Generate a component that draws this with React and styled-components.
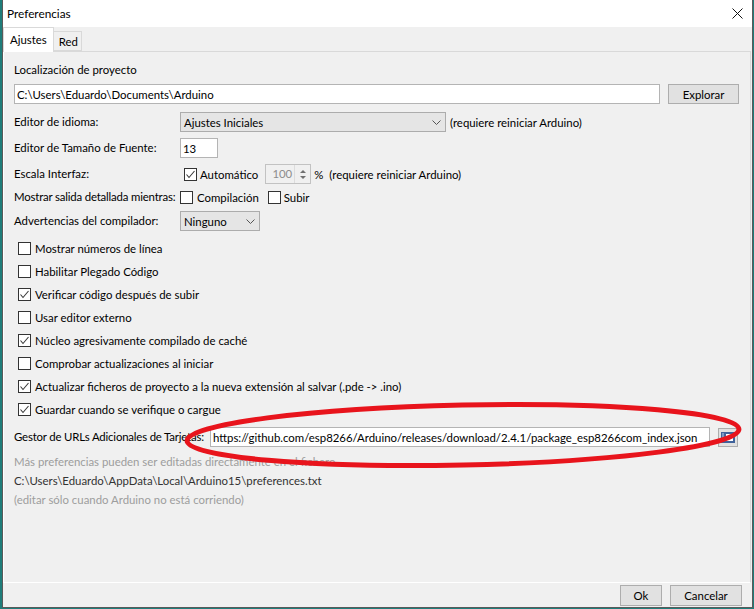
import React from "react";
import styled, { createGlobalStyle } from "styled-components";

const GlobalStyle = createGlobalStyle`
  html, body { margin: 0; padding: 0; }
  body {
    background: #1f7d7a;
    font-family: Lato, "Liberation Sans", sans-serif;
    font-size: 11.4px;
    color: #000;
  }
`;

const Page = styled.div`
  position: relative;
  width: 754px;
  height: 609px;
  padding-left: 2px;
  box-sizing: border-box;
  overflow: hidden;
`;

const Window = styled.div`
  width: 751px;
  height: 608px;
  box-sizing: border-box;
  border: 1px solid #5a5a5a;
  border-top: none;
  background: #f0f0f0;
  display: flex;
  flex-direction: column;
`;

const TitleBar = styled.div`
  flex: none;
  height: 27px;
  background: #fff;
  display: flex;
  align-items: center;
  justify-content: space-between;
  padding: 0 9px 0 4px;
`;

const Title = styled.span`
  font-size: 11.8px;
`;

const TabStrip = styled.div`
  flex: none;
  height: 24px;
  display: flex;
  align-items: flex-end;
`;

const Tab = styled.div`
  position: relative;
  z-index: 1;
  box-sizing: border-box;
  height: ${(p) => (p.$active ? "25px" : "20px")};
  margin-bottom: ${(p) => (p.$active ? "-1px" : "0")};
  padding: ${(p) => (p.$active ? "3px 6px 0" : "1px 3px 0 5px")};
  background: ${(p) => (p.$active ? "#fff" : "#f0f0f0")};
  border: 1px solid #d9d9d9;
  border-bottom: ${(p) => (p.$active ? "none" : "1px solid #d9d9d9")};
  border-left: ${(p) => (p.$active ? "1px solid #d9d9d9" : "none")};
  line-height: 17px;
`;

const Panel = styled.div`
  flex: 1;
  margin-right: 1px;
  border: 1px solid #d9d9d9;
  border-left-color: #fff;
  border-bottom-color: #fff;
  padding: 8px 11px 0 10px;
  display: flex;
  flex-direction: column;
`;

const Label = styled.div`
  line-height: 20px;
  white-space: nowrap;
  flex: none;
  width: ${(p) => (p.$width ? `${p.$width}px` : "auto")};
  letter-spacing: ${(p) => (p.$tight ? "-0.18px" : "normal")};
`;

const Row = styled.div`
  display: flex;
  align-items: center;
  height: 20px;
  margin-top: ${(p) => p.$top || 0}px;
`;

const TextField = styled.div`
  box-sizing: border-box;
  height: 20px;
  width: ${(p) => (p.$width ? `${p.$width}px` : "auto")};
  flex: ${(p) => (p.$width ? "none" : "1")};
  border: 1px solid #b4b4b4;
  background: #fff;
  padding: 0 2px;
  display: flex;
  align-items: center;
  white-space: nowrap;
  overflow: hidden;
`;

const Button = styled.button`
  box-sizing: border-box;
  width: ${(p) => p.$width}px;
  height: ${(p) => p.$height || 20}px;
  margin-left: ${(p) => p.$left || 0}px;
  border: 1px solid #adadad;
  background: #e1e1e1;
  font-family: inherit;
  font-size: 11.4px;
  color: #000;
  padding: 0;
  display: flex;
  align-items: center;
  justify-content: center;
  flex: none;
`;

const Select = styled.div`
  box-sizing: border-box;
  width: ${(p) => p.$width}px;
  height: 20px;
  border: 1px solid #acacac;
  background: #e5e5e5;
  padding: 0 4px 0 3px;
  display: flex;
  align-items: center;
  justify-content: space-between;
  flex: none;
`;

const Hint = styled.span`
  margin-left: ${(p) => p.$left || 0}px;
  white-space: nowrap;
`;

const CheckWrap = styled.label`
  display: flex;
  align-items: center;
  margin-left: ${(p) => p.$left || 0}px;
  white-space: nowrap;
`;

const Box = styled.span`
  box-sizing: border-box;
  width: 13px;
  height: 13px;
  border: 1px solid #333;
  background: #fff;
  margin-right: ${(p) => p.$gap || 4}px;
  display: flex;
  align-items: center;
  justify-content: center;
  flex: none;
`;

const CheckList = styled.div`
  margin-top: 6px;
  padding-left: 4px;
  display: flex;
  flex-direction: column;
`;

const CheckRow = styled.div`
  height: 23px;
  display: flex;
  align-items: center;
`;

const SpinBox = styled.div`
  box-sizing: border-box;
  width: 46px;
  height: 20px;
  margin-left: 7px;
  border: 1px solid #c2c2c2;
  background: #f0f0f0;
  display: flex;
  flex: none;
`;

const SpinValue = styled.div`
  flex: 1;
  text-align: right;
  padding-right: 2px;
  line-height: 18px;
  color: #8c8c8c;
`;

const SpinArrows = styled.div`
  width: 15px;
  border-left: 1px solid #dcdcdc;
  display: flex;
  flex-direction: column;
  align-items: center;
  justify-content: center;
  gap: 3px;
`;

const Arrow = styled.span`
  width: 0;
  height: 0;
  border-left: 3px solid transparent;
  border-right: 3px solid transparent;
  border-bottom: ${(p) => (p.$up ? "3px solid #707070" : "none")};
  border-top: ${(p) => (p.$up ? "none" : "3px solid #707070")};
`;

const Note = styled.div`
  line-height: 19px;
  white-space: nowrap;
  color: ${(p) => (p.$muted ? "#9d9d9d" : "#333")};
`;

const Notes = styled.div`
  margin-top: 5px;
`;

const Footer = styled.div`
  flex: none;
  height: 24px;
  box-sizing: border-box;
  padding: 2px 10px 0 0;
  display: flex;
  justify-content: flex-end;
  gap: 8px;
`;

const Overlay = styled.svg`
  position: absolute;
  left: 0;
  top: 0;
  pointer-events: none;
`;

const Chevron = () => (
  <svg width="9" height="5" viewBox="0 0 9 5">
    <polyline points="0.5,0.5 4.5,4.5 8.5,0.5" fill="none" stroke="#555" strokeWidth="1" />
  </svg>
);

const Check = ({ checked, gap, children, left }) => (
  <CheckWrap $left={left}>
    <Box $gap={gap}>
      {checked && (
        <svg width="11" height="11" viewBox="0 0 11 11">
          <polyline points="1.5,5.5 4,8.5 9.5,2" fill="none" stroke="#3a3a3a" strokeWidth="1.1" />
        </svg>
      )}
    </Box>
    {children}
  </CheckWrap>
);

const options = [
  ["Mostrar números de línea", false],
  ["Habilitar Plegado Código", false],
  ["Verificar código después de subir", true],
  ["Usar editor externo", false],
  ["Núcleo agresivamente compilado de caché", true],
  ["Comprobar actualizaciones al iniciar", false],
  ["Actualizar ficheros de proyecto a la nueva extensión al salvar (.pde -> .ino)", true],
  ["Guardar cuando se verifique o cargue", true],
];

export default function App() {
  return (
    <Page>
      <GlobalStyle />
      <Window>
        <TitleBar>
          <Title>Preferencias</Title>
          <svg width="11" height="11" viewBox="0 0 11 11">
            <path d="M0.5 0.5 L10.5 10.5 M10.5 0.5 L0.5 10.5" stroke="#111" strokeWidth="1" />
          </svg>
        </TitleBar>
        <TabStrip>
          <Tab $active>Ajustes</Tab>
          <Tab>Red</Tab>
        </TabStrip>
        <Panel>
          <Label>Localización de proyecto</Label>
          <Row $top={4}>
            <TextField>C:\Users\Eduardo\Documents\Arduino</TextField>
            <Button $width={71} $left={8}>Explorar</Button>
          </Row>
          <Row $top={8}>
            <Label $width={166}>Editor de idioma:</Label>
            <Select $width={266}>
              <span>Ajustes Iniciales</span>
              <Chevron />
            </Select>
            <Hint $left={4}>(requiere reiniciar Arduino)</Hint>
          </Row>
          <Row $top={6}>
            <Label $width={166}>Editor de Tamaño de Fuente:</Label>
            <TextField $width={38}>13</TextField>
          </Row>
          <Row $top={6}>
            <Label $width={166}>Escala Interfaz:</Label>
            <Check checked left={4} gap={3}>Automático</Check>
            <SpinBox>
              <SpinValue>100</SpinValue>
              <SpinArrows>
                <Arrow $up />
                <Arrow />
              </SpinArrows>
            </SpinBox>
            <Hint $left={3}>%</Hint>
            <Hint $left={6}>(requiere reiniciar Arduino)</Hint>
          </Row>
          <Row $top={3}>
            <Label $width={166} $tight>Mostrar salida detallada mientras:</Label>
            <Check>Compilación</Check>
            <Check left={9} gap={3}>Subir</Check>
          </Row>
          <Row $top={4}>
            <Label $width={166}>Advertencias del compilador:</Label>
            <Select $width={80}>
              <span>Ninguno</span>
              <Chevron />
            </Select>
          </Row>
          <CheckList>
            {options.map(([text, on]) => (
              <CheckRow key={text}>
                <Check checked={on}>{text}</Check>
              </CheckRow>
            ))}
          </CheckList>
          <Row $top={6}>
            <Label $width={196} $tight>Gestor de URLs Adicionales de Tarjetas:</Label>
            <TextField $width={500}>
              https://github.com/esp8266/Arduino/releases/download/2.4.1/package_esp8266com_index.json
            </TextField>
            <Button $width={20} $height={19} $left={8}>
              <svg width="14" height="11" viewBox="0 0 14 11">
                <rect x="0" y="0" width="14" height="11" fill="#40639b" />
                <rect x="1" y="1" width="2" height="9" fill="#7f9ac4" />
                <rect x="5" y="2" width="7" height="7" fill="#fff" />
              </svg>
            </Button>
          </Row>
          <Notes>
            <Note $muted>Más preferencias pueden ser editadas directamente en el fichero</Note>
            <Note>C:\Users\Eduardo\AppData\Local\Arduino15\preferences.txt</Note>
            <Note $muted>(editar sólo cuando Arduino no está corriendo)</Note>
          </Notes>
        </Panel>
        <Footer>
          <Button $width={42} $height={21}>Ok</Button>
          <Button $width={72} $height={21}>Cancelar</Button>
        </Footer>
      </Window>
      <Overlay width="754" height="609" viewBox="0 0 754 609">
        <ellipse
          cx="463"
          cy="435"
          rx="276"
          ry="30"
          fill="none"
          stroke="#e8141c"
          strokeWidth="5"
          transform="rotate(-1.2 463 435)"
        />
      </Overlay>
    </Page>
  );
}
